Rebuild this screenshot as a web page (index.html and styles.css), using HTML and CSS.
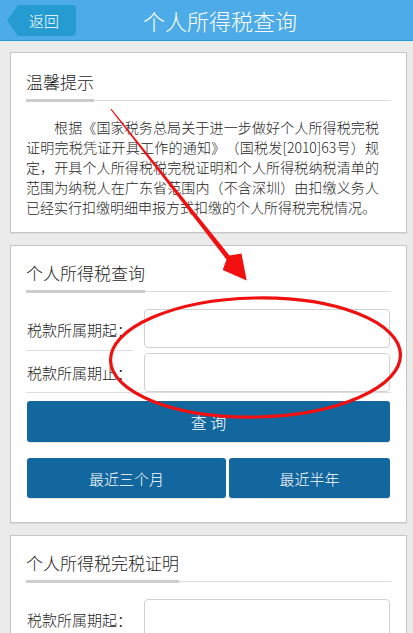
FILE: index.html
```html
<!DOCTYPE html>
<html lang="zh-CN">
<head>
<meta charset="utf-8">
<title>个人所得税查询</title>
<link rel="stylesheet" href="styles.css">
</head>
<body>
<div class="page">
  <header class="topbar">
    <a class="back">返回</a>
    <h1 class="title">个人所得税查询</h1>
  </header>

  <main class="content">
    <section class="card card-first">
      <div class="card-head"><h2>温馨提示</h2></div>
      <p class="notice">根据《国家税务总局关于进一步做好个人所得税完税证明完税凭证开具工作的通知》（国税发[2010]63号）规定，开具个人所得税税完税证明和个人所得税纳税清单的范围为纳税人在广东省范围内（不含深圳）由扣缴义务人已经实行扣缴明细申报方式扣缴的个人所得税完税情况。</p>
    </section>

    <section class="card">
      <div class="card-head"><h2>个人所得税查询</h2></div>
      <div class="form">
        <div class="row">
          <label class="label">税款所属期起：</label>
          <div class="input"></div>
        </div>
        <div class="row row-last">
          <label class="label">税款所属期止：</label>
          <div class="input"></div>
        </div>
      </div>
      <button class="btn btn-main">查 询</button>
      <div class="btn-group">
        <button class="btn">最近三个月</button>
        <button class="btn">最近半年</button>
      </div>
    </section>

    <section class="card">
      <div class="card-head"><h2>个人所得税完税证明</h2></div>
      <div class="form">
        <div class="row">
          <label class="label">税款所属期起：</label>
          <div class="input"></div>
        </div>
      </div>
    </section>
  </main>

  <svg class="annot" width="413" height="633" viewBox="0 0 413 633" aria-hidden="true">
    <polygon points="110.6,109.5 111.4,108.8 229.5,255.5 241.5,253.5 246.7,280.5 222.7,270 226.5,259.5" fill="#f21010"/>
    <ellipse cx="255.5" cy="357.5" rx="145" ry="59.5" transform="rotate(-1.2 255.5 357.5)" fill="none" stroke="#f01010" stroke-width="3.2"/>
  </svg>
</div>
</body>
</html>
```

FILE: styles.css
```css
* { box-sizing: border-box; }

html, body {
  margin: 0;
  padding: 0;
}

body {
  background: #ebebeb;
  font-family: "Noto Sans CJK SC", "Noto Sans", "DejaVu Sans", sans-serif;
  font-weight: 300;
  color: #1e1e1e;
  width: 413px;
  height: 633px;
  overflow: hidden;
  text-spacing-trim: space-all;
}

.page {
  position: relative;
  width: 413px;
  height: 633px;
  overflow: hidden;
}

/* ---------- top bar ---------- */
.topbar {
  height: 41px;
  background: #4dabe7;
  border-bottom: 1px solid #2a99d8;
  display: flex;
  align-items: center;
}

.back {
  margin-left: 7px;
  width: 69px;
  height: 31px;
  background: #249cd2;
  color: #fff;
  font-size: 15px;
  line-height: 31px;
  padding-left: 22px;
  clip-path: polygon(11px 0, 100% 0, 100% 100%, 11px 100%, 0 50%);
  border-radius: 0 4px 4px 0;
  margin-top: 1px;
}

.title {
  margin: 0 0 0 67px;
  font-size: 22px;
  font-weight: 300;
  color: #fff;
  line-height: 30px;
}

/* ---------- cards ---------- */
.content {
  padding: 11px 6px 0 10px;
  display: flex;
  flex-direction: column;
  gap: 12px;
}

.card {
  background: #fff;
  border: 1px solid #c6c6c6;
  box-shadow: 0 1px 1px rgba(0,0,0,0.06);
  padding: 15px 15px 24px 15px;
}

.card-first {
  padding-top: 17px;
  padding-bottom: 15px;
}

.card-head {
  display: flex;
  border-bottom: 1px solid #dcdcdc;
}

.card-head h2 {
  margin: 0 0 -2px 0;
  font-size: 17px;
  font-weight: 300;
  line-height: 24px;
  padding-bottom: 5px;
  border-bottom: 3px solid #cdcdcd;
  color: #1e1e1e;
}

.notice {
  margin: 16px 12px 0 0;
  font-size: 14px;
  line-height: 20px;
  text-indent: 2em;
  text-align: justify;
  color: #1e1e1e;
}

/* ---------- form ---------- */
.form {
  margin-top: 17px;
}

.row {
  display: flex;
  align-items: stretch;
}

.label {
  width: 107px;
  flex: none;
  font-size: 15px;
  display: flex;
  align-items: center;
  padding-left: 1px;
  border-bottom: 1px solid #dedede;
  color: #1e1e1e;
}

.input {
  flex: 1;
  height: 39px;
  margin: 0 1px 3px 11px;
  border: 1px solid #d2d2d2;
  border-radius: 4px;
  background: #fff;
}

.row-last {
  padding-top: 2px;
  border-bottom: 1px solid #dedede;
}

.row-last .label {
  border-bottom: none;
}

.row-last .input {
  margin-bottom: 0;
}

/* ---------- buttons ---------- */
.btn {
  display: block;
  border: none;
  border-radius: 3px;
  background: #13679f;
  color: #fff;
  font-family: inherit;
  font-weight: 300;
  font-size: 15px;
  height: 40px;
  padding: 0;
  box-shadow: 0 1px 1px rgba(0,0,0,0.12);
}

.btn-main {
  width: calc(100% - 2px);
  margin: 8px 0 0 1px;
  height: 41px;
  font-size: 16px;
}

.btn-group {
  display: grid;
  grid-template-columns: 199px 1fr;
  gap: 3px;
  margin: 16px 1px 0 1px;
}

/* ---------- annotation overlay ---------- */
.annot {
  position: absolute;
  left: 0;
  top: 0;
  pointer-events: none;
}
```
